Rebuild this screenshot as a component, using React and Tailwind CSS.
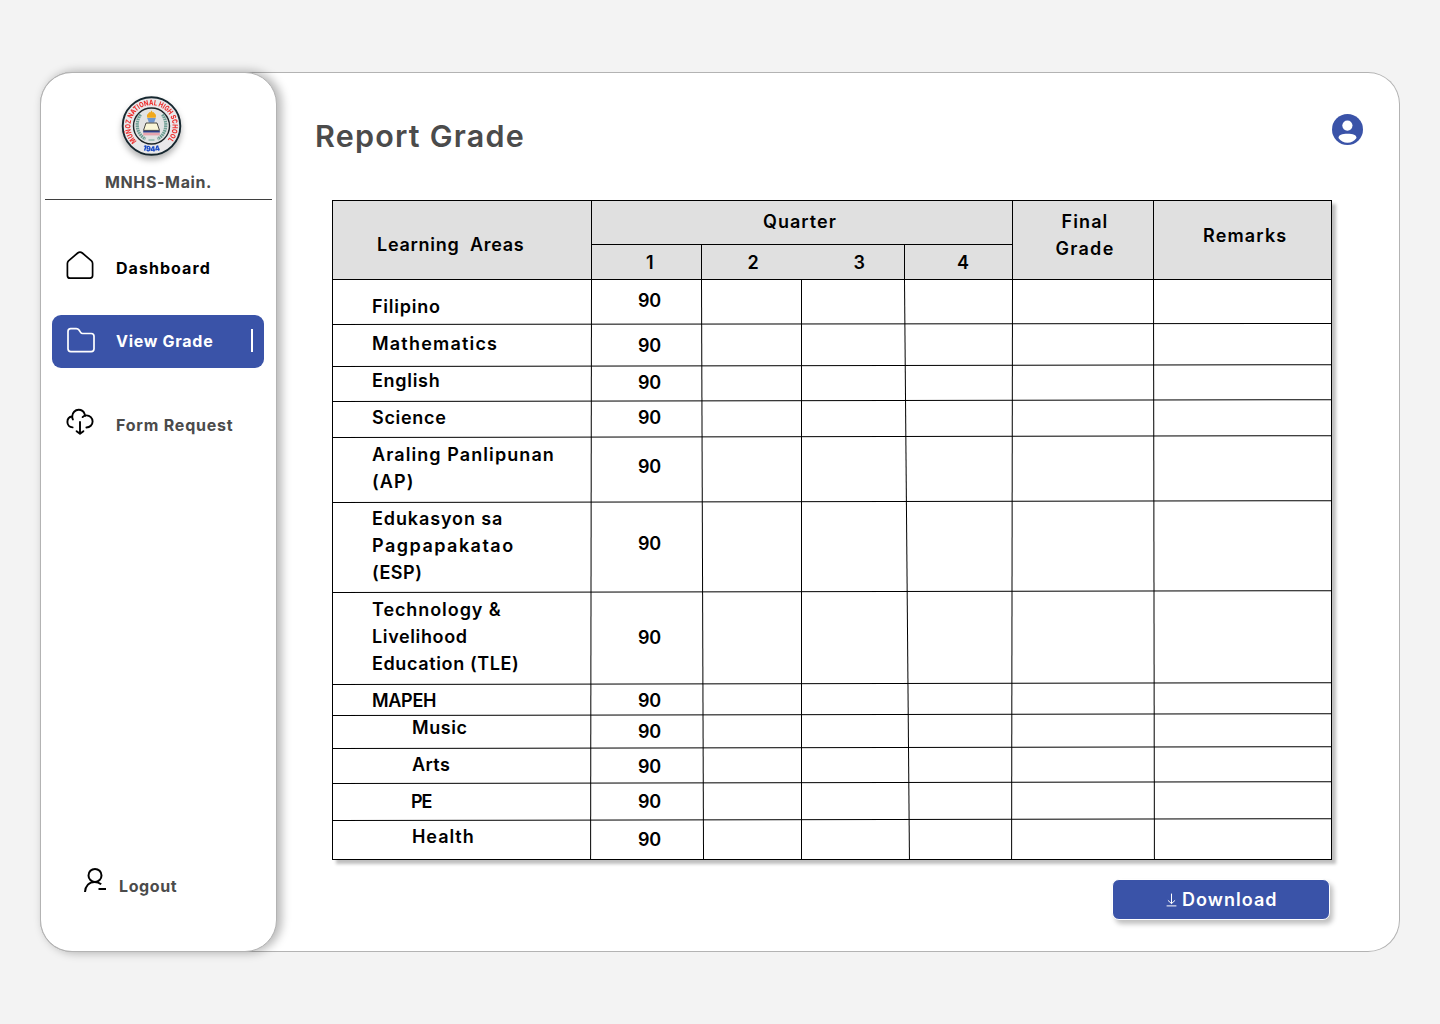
const COLS = 'grid grid-cols-[258px_110px_100px_103px_108px_141px_178px]';

const ROWS = [
  { h: 'h-[45px]', pad: 'pt-[13px]', num: 'pt-[7px]', lines: [['Filipino', 'tracking-[0.75px]']], tilt: 'after:-rotate-[0.06deg]' },
  { h: 'h-[42px]', pad: 'pt-[5px]', num: 'pt-[7px]', lines: [['Mathematics', 'tracking-[1.2px]']] },
  { h: 'h-[35px]', pad: 'pt-0', num: 'pt-[2px]', lines: [['English', 'tracking-[0.7px]']] },
  { h: 'h-[36px]', pad: 'pt-[2px]', num: 'pt-[2px]', lines: [['Science', 'tracking-[0.7px]']] },
  { h: 'h-[65px]', pad: 'pt-[3px]', num: 'pt-[15px]', lines: [['Araling Panlipunan', 'tracking-[1.08px]'], ['(AP)', 'tracking-[1.1px]']] },
  { h: 'h-[90px]', pad: 'pt-[2px]', num: 'pt-[27px]', lines: [['Edukasyon sa', 'tracking-[0.88px]'], ['Pagpapakatao', 'tracking-[1.48px]'], ['(ESP)', 'tracking-[0.5px]']] },
  { h: 'h-[92px]', pad: 'pt-[3px]', num: 'pt-[31px]', lines: [['Technology &', 'tracking-[0.92px]'], ['Livelihood', 'tracking-[0.62px]'], ['Education (TLE)', 'tracking-[0.62px]']] },
  { h: 'h-[31px]', pad: 'pt-[2px]', num: 'pt-[2px]', lines: [['MAPEH', '-tracking-[0.3px]']] },
  { h: 'h-[33px]', pad: '-mt-[2px]', num: 'pt-[2px]', indent: 'pl-[79px]', lines: [['Music', 'tracking-[0.55px]']] },
  { h: 'h-[35px]', pad: 'pt-[2px]', num: 'pt-[4px]', indent: 'pl-[79px]', lines: [['Arts', 'tracking-[0.4px]']] },
  { h: 'h-[37px]', pad: 'pt-[4px]', num: 'pt-[4px]', indent: 'pl-[78px]', lines: [['PE', 'tracking-[-1px]']] },
  { h: 'h-[38px]', pad: 'pt-[2px]', num: 'pt-[5px]', indent: 'pl-[79px]', lines: [['Health', 'tracking-[0.95px]']] },
];

function SchoolSeal() {
  return (
    <svg width="64" height="64" viewBox="-32.5 -32 64 64" className="drop-shadow-[0_4px_3px_rgba(0,0,0,0.3)]">
      <circle r="28.8" fill="#e9e8ea" stroke="#16272f" strokeWidth="1.9" />
      <circle r="18" fill="#e2e3e3" stroke="#1c2427" strokeWidth="1.4" />
      <defs>
        <path id="seal-top" d="M-14.6 15.2A21 21 0 1 1 14.6 15.2" />
        <path id="seal-bottom" d="M-16 20A25.6 25.6 0 0 0 16 20" />
      </defs>
      <text fontFamily="Inter, sans-serif" fontSize="7.4" fontWeight="800" fill="#ee3433">
        <textPath href="#seal-top" textLength="97" lengthAdjust="spacingAndGlyphs" startOffset="0">MUÑOZ NATIONAL HIGH SCHOOL</textPath>
      </text>
      <text fontFamily="Inter, sans-serif" fontSize="7.4" fontWeight="900" fill="#1748c5" textAnchor="middle">
        <textPath href="#seal-bottom" startOffset="50%" textLength="18" lengthAdjust="spacingAndGlyphs">1944</textPath>
      </text>
      <path d="M-11 -11.5C-16.4 -4 -15.4 8 -6 13" fill="none" stroke="#6f9f94" strokeWidth="3.2" strokeDasharray="1.7 .6" />
      <path d="M11 -11.5C16.4 -4 15.4 8 6 13" fill="none" stroke="#6f9f94" strokeWidth="3.2" strokeDasharray="1.7 .6" />
      <path d="M-3 14H3" stroke="#8fb8aa" strokeWidth="1.4" />
      <path d="M-4.2 -8.3C-5.4 -12 -3 -12 -2.2 -14C-1 -12.6 -.8 -14.6 0 -15.4C.8 -14.6 1 -12.6 2.2 -14C3 -12 5.4 -12 4.2 -8.3Z" fill="#f0a81c" />
      <path d="M-4.3 -8H4.3L2.6 -3.5H-2.6Z" fill="#6f97cf" />
      <path d="M-5.5 -3H5.5L8 4.4H-8Z" fill="#f9f6d6" stroke="#1e1e1c" strokeWidth=".8" />
      <path d="M-8.3 4.8H8.3V6.6H-8.3Z" fill="#2c3c86" />
      <path d="M-8.3 6.8H8.3V9.4H-8.3Z" fill="#e7a5ae" />
    </svg>
  );
}

function Sidebar() {
  return (
    <aside className="flex w-[237px] shrink-0 flex-col rounded-[32px] border border-[#b3b3b3] bg-white shadow-[4px_0px_10px_1px_rgba(0,0,0,0.28)]">
      <div className="ml-[78px] mt-[21px] h-16 w-16"><SchoolSeal /></div>
      <div className="ml-[64px] mt-[12px] text-base/6 font-bold tracking-[0.62px] text-[#4b4b4b]">MNHS-Main.</div>
      <div className="mx-1 mt-[5px] h-px bg-[#3f3f3f]" />

      <nav className="ml-[11px] mr-[12px] mt-[42px] flex flex-col text-base/6 font-bold">
        <a className="flex h-[53px] items-center pl-[14px]">
          <svg width="28" height="29" viewBox="0 0 28 29" fill="none" stroke="#000" strokeWidth="1.7" strokeLinejoin="round" className="-mt-[6px]">
            <path d="M1.4 12.6C1.4 11.3 1.7 10.7 2.5 9.9L11.7 2C13.1 .8 14.9 .8 16.3 2L25.5 9.9C26.3 10.7 26.6 11.3 26.6 12.6V24.6C26.6 26.4 25.8 27.2 24 27.2H4C2.2 27.2 1.4 26.4 1.4 24.6Z" />
          </svg>
          <span className="-mt-[2px] ml-[22px] tracking-[1.05px] text-black">Dashboard</span>
        </a>
        <a className="mt-[20px] flex h-[53px] items-center rounded-[9px] bg-[#3a53a8] pl-[14px] pr-[11px]">
          <svg width="30" height="27" viewBox="0 0 30 27" fill="none" stroke="#fff" strokeWidth="1.7" strokeLinejoin="round" className="-mt-[3px]">
            <path d="M2 4.4C2 2.5 2.9 1.6 4.8 1.6H10.3C11.6 1.6 12.3 2 13 3L14.6 5.4C15.1 6.2 15.6 6.5 16.6 6.5H25.2C27.1 6.5 28 7.4 28 9.3V21.8C28 23.7 27.1 24.6 25.2 24.6H4.8C2.9 24.6 2 23.7 2 21.8Z" />
          </svg>
          <span className="-mt-[2px] ml-[20px] tracking-[0.72px] text-white">View Grade</span>
          <span className="-mt-[2px] ml-auto h-[23px] w-[2px] bg-white" />
        </a>
        <a className="mt-[31px] flex h-[53px] items-center pl-[14px]">
          <svg width="28" height="28" viewBox="0 0 28 28" fill="none" stroke="#000" strokeWidth="1.9" strokeLinecap="round" strokeLinejoin="round" className="-mt-[8px]">
            <path d="M6.6 19.4C3.6 19.2 1.4 17 1.4 14C1.4 11.1 3.3 8.8 6.2 8.5C6.3 4.7 9.1 1.8 12.6 1.8C15.5 1.8 17.8 3.6 18.7 6.2C18.9 6.8 19 7.3 19 7.9" />
            <path d="M6.2 8.5C6.2 9.6 6.4 10.6 6.9 11.4M16.6 9.1C17.6 8 19 7.4 20.4 7.4C23.9 7.4 26.6 10.1 26.6 13.5C26.6 16.8 23.9 19.4 20.4 19.5M14 14V25.4M10.6 23.2L14 25.8L17.4 23.2" />
          </svg>
          <span className="-mt-[2px] ml-[22px] tracking-[0.79px] text-[#4b4b4b]">Form Request</span>
        </a>
      </nav>

      <a className="mb-[53px] ml-[42px] mt-auto flex items-center text-base/6 font-bold text-[#4b4b4b]">
        <svg width="24" height="26" viewBox="0 0 24 26" fill="none" stroke="#000" strokeWidth="2" className="-mt-[12px]">
          <circle cx="12" cy="8.4" r="6.5" />
          <path d="M2 25C2.3 18.8 6.3 14.9 11.6 14.9C14.3 14.9 16.4 15.7 18.2 17.2M15.5 22H23" />
        </svg>
        <span className="ml-[12px] tracking-[0.6px]">Logout</span>
      </a>
    </aside>
  );
}

function GradeTable() {
  return (
    <div className="ml-[55px] mt-[48px] h-[660px] w-[1000px] border border-black bg-white text-[18px]/[27px] font-semibold text-black shadow-[4px_4px_3px_rgba(0,0,0,0.25)]">
      <div className="flex h-[79px] border-b border-black bg-[#e0e0e0]">
        <div className="w-[258px] pl-[44px] pt-[30px] tracking-[0.72px]">Learning&nbsp; Areas</div>
        <div className="w-[421px] border-l border-black">
          <div className="h-[44px] border-b border-black pl-[171px] pt-[7px] tracking-[1.03px]">Quarter</div>
          <div className="grid h-[34px] grid-cols-[109px_100px_103px_108px]">
            <span className="pl-[54px] pt-[4px]">1</span>
            <span className="border-l border-black pl-[45.5px] pt-[4px]">2</span>
            <span className="pl-[52.5px] pt-[4px]">3</span>
            <span className="border-l border-black pl-[52px] pt-[4px]">4</span>
          </div>
        </div>
        <div className="w-[141px] border-l border-black pl-[4px] pt-[7px] text-center">
          <div className="tracking-[1.1px]">Final</div>
          <div className="tracking-[1.3px]">Grade</div>
        </div>
        <div className="w-[178px] border-l border-black pl-[49px] pt-[21px] tracking-[1.15px]">Remarks</div>
      </div>

      <div className="relative h-[579px]">
        <div className={`absolute inset-x-0 -bottom-px top-0 ${COLS}`}>
          <i />
          <i className="w-px origin-top rotate-[0.09deg] bg-black" />
          <i className="w-px origin-top -rotate-[0.2deg] bg-black" />
          <i className="w-px bg-black" />
          <i className="w-px origin-top -rotate-[0.49deg] bg-black" />
          <i className="w-px origin-top rotate-[0.09deg] bg-black" />
          <i className="w-px origin-top -rotate-[0.09deg] bg-black" />
        </div>
        {ROWS.map((row, i) => (
          <div
            key={row.lines[0][0]}
            className={`relative ${COLS} ${row.h} ${
              i < ROWS.length - 1
                ? `after:absolute after:inset-x-0 after:bottom-0 after:h-px after:origin-left after:bg-black ${row.tilt || 'after:-rotate-[0.1deg]'}`
                : ''
            }`}
          >
            <div className={`${row.indent || 'pl-[39px]'} ${row.pad}`}>
              {row.lines.map(([text, tracking]) => (
                <div key={text} className={tracking}>{text}</div>
              ))}
            </div>
            <div className={`pl-[47px] tracking-[-0.2px] ${row.num}`}>90</div>
          </div>
        ))}
      </div>
    </div>
  );
}

export default function App() {
  return (
    <div className="h-[1024px] w-[1440px] bg-[#f3f3f3] px-10 py-[72px] font-['Inter',sans-serif]">
      <div className="flex h-[880px] w-[1360px] rounded-[32px] bg-white shadow-[inset_0_0_0_1px_#b3b3b3]">
        <Sidebar />
        <main className="flex min-w-0 flex-1 flex-col">
          <header className="flex h-[80px] items-start justify-between pl-[38px] pr-[37px] pt-[42px]">
            <h1 className="text-[30.5px]/[44px] font-semibold tracking-[1.2px] text-[#4b4b4b]">Report Grade</h1>
            <svg width="31" height="31" viewBox="0 0 31 31">
              <circle cx="15.5" cy="15.5" r="15.5" fill="#3a53a8" />
              <circle cx="15.4" cy="11.6" r="5.1" fill="#fff" />
              <path d="M6.5 24C6.5 20.9 10 19.8 15.5 19.8C21 19.8 24.5 20.9 24.5 24C22.4 27 19.2 28.7 15.5 28.7C11.8 28.7 8.6 27 6.5 24Z" fill="#fff" />
            </svg>
          </header>
          <GradeTable />
          <button className="ml-[835px] mt-[19px] flex h-[41px] w-[218px] items-center rounded-[7px] border border-white bg-[#3a53a8] pl-[53px] text-[18px]/[27px] font-semibold text-white shadow-[3px_4px_5px_rgba(0,0,0,0.25)]">
            <svg width="11" height="14" viewBox="0 0 11 14" fill="none" stroke="#fff" strokeWidth="1" strokeLinecap="round">
              <path d="M5.5 1V10.4M2.2 7.6L5.5 10.6L8.8 7.6M1 12.9H10" />
            </svg>
            <span className="ml-[5px] tracking-[1.05px]">Download</span>
          </button>
        </main>
      </div>
    </div>
  );
}
